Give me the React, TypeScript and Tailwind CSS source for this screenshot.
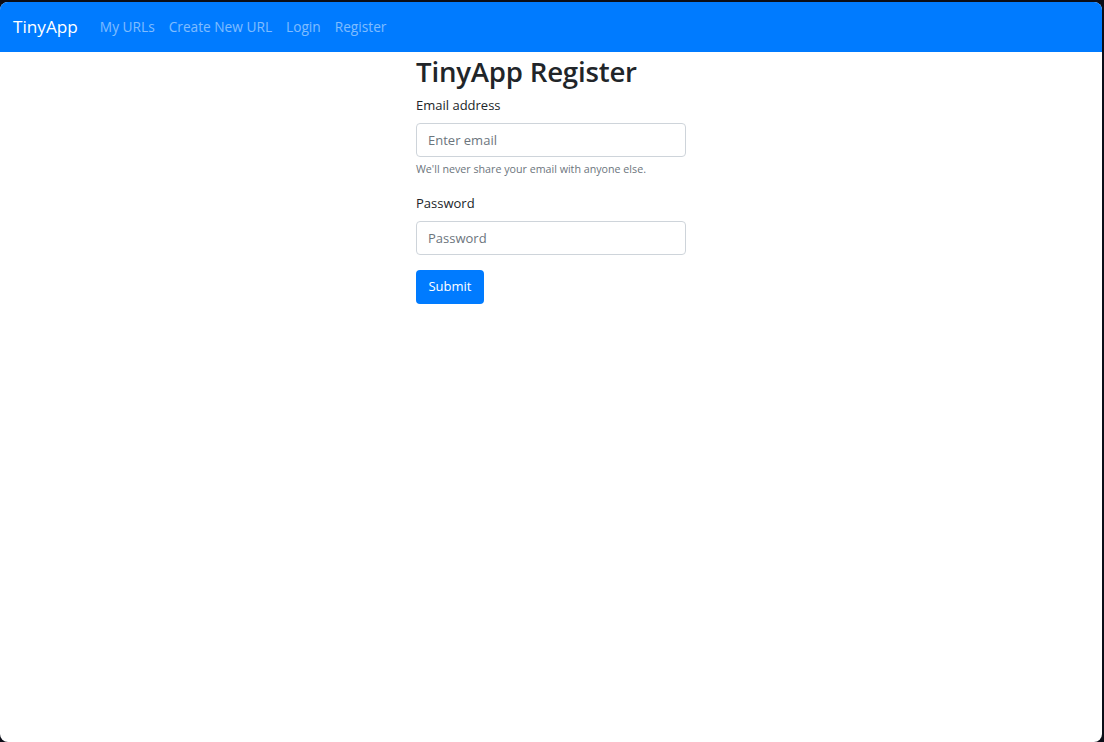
export default function App() {
  const links = ["My URLs", "Create New URL", "Login", "Register"];

  return (
    <div className="h-[742px] w-[1104px] bg-[#0b0d17] pt-[2px] pr-[2px]" style={{ fontFamily: '"Open Sans", "Noto Sans", sans-serif' }}>
      <div className="flex h-full flex-col overflow-hidden rounded-[8px] bg-white">
        <nav className="flex h-[50px] items-center bg-[#007bff] px-[13px]">
          <span className="mr-[22px] text-[17.2px] text-white">TinyApp</span>
          <ul className="flex gap-[14px]">
            {links.map((l) => (
              <li key={l} className="text-[13.7px] text-white/50">
                {l}
              </li>
            ))}
          </ul>
        </nav>

        <main className="mx-auto w-[270px] pt-[1px] text-[#212529]">
          <h1 className="text-[27.6px] font-semibold leading-[36px] tracking-[-0.2px]">TinyApp Register</h1>

          <form className="mt-[6px]">
            <div className="mb-[16px]">
              <label className="block text-[13px] leading-[20px]">Email address</label>
              <input
                type="email"
                placeholder="Enter email"
                className="mt-[8px] block h-[34px] w-full rounded-[4px] border border-[#ced4da] px-[11px] text-[13px] placeholder:text-[#6c757d]"
              />
              <small className="mt-[4px] block text-[10.7px] leading-[16px] text-[#6c757d]">
                We'll never share your email with anyone else.
              </small>
            </div>

            <div className="mb-[15px]">
              <label className="block text-[13px] leading-[20px]">Password</label>
              <input
                type="password"
                placeholder="Password"
                className="mt-[8px] block h-[34px] w-full rounded-[4px] border border-[#ced4da] px-[11px] text-[13px] placeholder:text-[#6c757d]"
              />
            </div>

            <button type="button" className="h-[34px] w-[68px] rounded-[4px] bg-[#007bff] text-[13px] text-white">
              Submit
            </button>
          </form>
        </main>
      </div>
    </div>
  );
}
